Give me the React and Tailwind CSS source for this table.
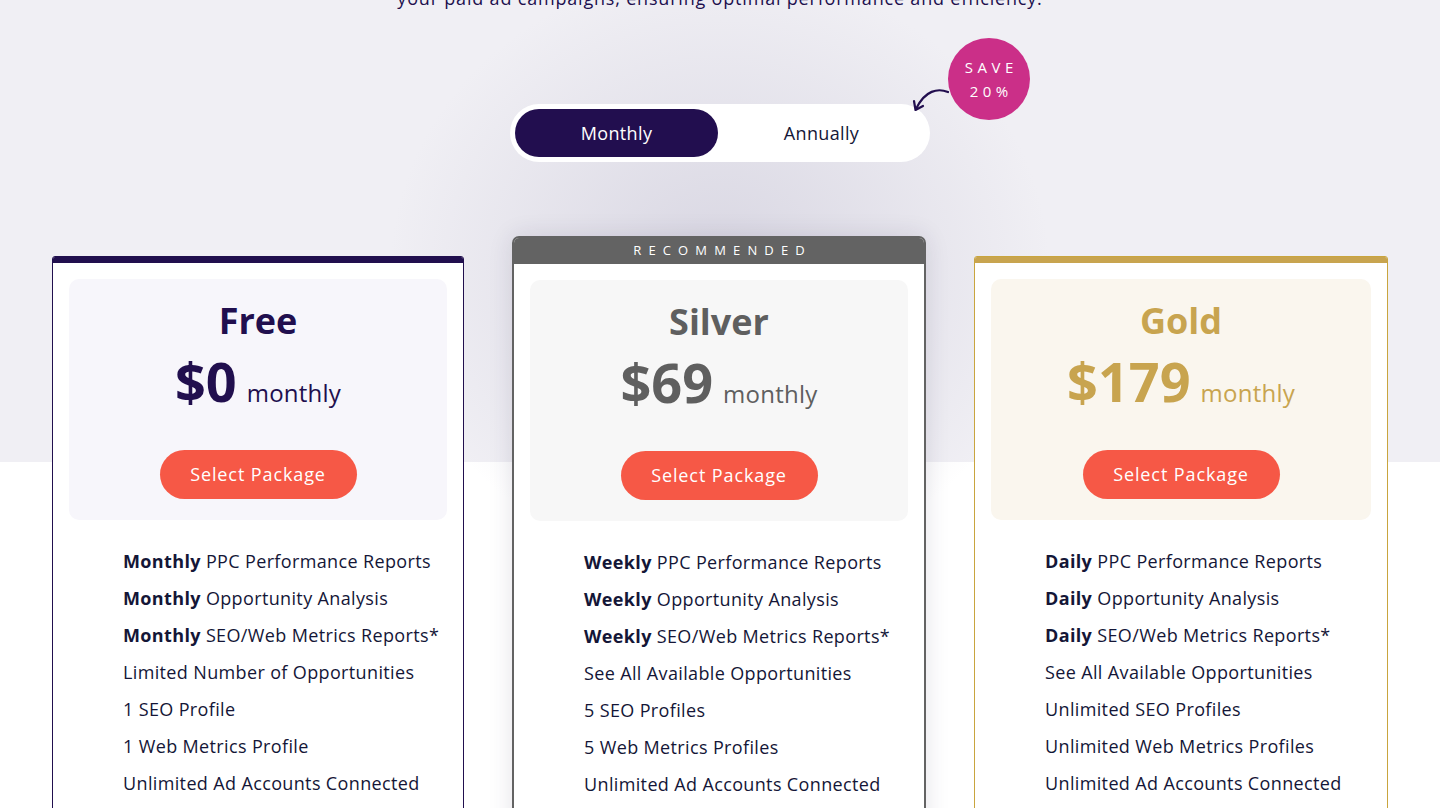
import React, { useState } from 'react';

const plans = [
  {
    name: 'Free',
    price: '$0',
    accent: 'text-[#210f4e]',
    border: 'border-[#210f4e]',
    bar: 'bg-[#210f4e]',
    box: 'bg-[#f7f6fb]',
    freq: 'Monthly',
    features: [
      'Limited Number of Opportunities',
      '1 SEO Profile',
      '1 Web Metrics Profile',
      'Unlimited Ad Accounts Connected'
    ]
  },
  {
    name: 'Silver',
    price: '$69',
    accent: 'text-[#5f5f5f]',
    border: 'border-[#636363]',
    bar: 'bg-[#636363]',
    box: 'bg-[#f7f7f7]',
    freq: 'Weekly',
    recommended: true,
    features: [
      'See All Available Opportunities',
      '5 SEO Profiles',
      '5 Web Metrics Profiles',
      'Unlimited Ad Accounts Connected'
    ]
  },
  {
    name: 'Gold',
    price: '$179',
    accent: 'text-[#c8a44f]',
    border: 'border-[#c9a53e]',
    bar: 'bg-[#c8a44f]',
    box: 'bg-[#faf6ee]',
    freq: 'Daily',
    width: 'w-[414px]',
    features: [
      'See All Available Opportunities',
      'Unlimited SEO Profiles',
      'Unlimited Web Metrics Profiles',
      'Unlimited Ad Accounts Connected'
    ]
  }
];

const PlanCard = ({ plan }) => {
  const rec = plan.recommended;
  return (
    <div
      className={
        rec
          ? 'w-[414px] bg-white rounded-t-[7px] overflow-hidden border-2 border-[#636363] shadow-[0_0_24px_rgba(40,30,70,0.12)]'
          : `${plan.width || 'w-[412px]'} mt-[20px] bg-white rounded-t-[3px] overflow-hidden border ${plan.border}`
      }
    >
      {rec ? (
        <div className="h-[26px] bg-[#636363] text-white text-[13px] tracking-[0.55em] font-medium flex items-center justify-center pl-[0.55em]">
          RECOMMENDED
        </div>
      ) : (
        <div className={`h-[6px] ${plan.bar}`} />
      )}

      <div className="px-[16px] pt-[16px]">
        {/* --- Price box --- */}
        <div className={`${plan.box} rounded-[10px] pt-[20px] pb-[21px] flex flex-col items-center`}>
          <h3 className={`text-[36px] leading-[44px] font-bold ${plan.accent}`}>{plan.name}</h3>
          <div className={`mt-[6px] h-[64px] flex items-baseline gap-[10px] ${plan.accent}`}>
            <span className="text-[54px] leading-[64px] font-bold">{plan.price}</span>
            <span className="text-[24px] tracking-[0.01em]">monthly</span>
          </div>
          <button className="mt-[37px] w-[197px] h-[49px] rounded-full bg-[#f65846] text-white text-[18px] tracking-[0.05em]">
            Select Package
          </button>
        </div>

        {/* --- Features --- */}
        <ul className="pl-[54px] pt-[23px] pb-[40px] text-[18px] leading-[37px] tracking-[0.02em] text-[#141637]">
          <li><span className="font-bold">{plan.freq}</span> PPC Performance Reports</li>
          <li><span className="font-bold">{plan.freq}</span> Opportunity Analysis</li>
          <li><span className="font-bold">{plan.freq}</span> SEO/Web Metrics Reports*</li>
          {plan.features.map((f) => (
            <li key={f}>{f}</li>
          ))}
        </ul>
      </div>
    </div>
  );
};

export default function App() {
  const [billing, setBilling] = useState('monthly');

  return (
    <div
      className="min-h-screen overflow-hidden font-['Open_Sans',sans-serif] bg-[radial-gradient(ellipse_330px_300px_at_720px_270px,#d8d6e2,rgba(240,239,244,0)),linear-gradient(to_bottom,#f0eff4_462px,#ffffff_462px)]"
    >
      {/* --- Header copy --- */}
      <p className="-mt-[16px] text-center text-[18px] leading-[28px] tracking-[0.045em] text-[#210f4e]">
        your paid ad campaigns, ensuring optimal performance and efficiency.
      </p>

      {/* --- Billing toggle --- */}
      <div className="mt-[92px] flex justify-center">
        <div className="relative">
          <div className="w-[420px] h-[58px] bg-white rounded-full p-[5px] flex">
            <button
              onClick={() => setBilling('monthly')}
              className={`w-[203px] h-[48px] rounded-full text-[18px] tracking-[0.02em] ${billing === 'monthly' ? 'bg-[#220e4f] text-white' : 'text-[#141637]'}`}
            >
              Monthly
            </button>
            <button
              onClick={() => setBilling('annually')}
              className={`flex-1 h-[48px] rounded-full text-[18px] tracking-[0.02em] ${billing === 'annually' ? 'bg-[#220e4f] text-white' : 'text-[#141637]'}`}
            >
              Annually
            </button>
          </div>

          <svg className="absolute left-[400px] -top-[16px]" width="42" height="28" viewBox="0 0 42 28" fill="none">
            <path d="M38 4 C 28 0, 15 2, 6 21" stroke="#220e4f" strokeWidth="2.2" strokeLinecap="round" />
            <path d="M4 13 L 5.5 22 L 13 18" stroke="#220e4f" strokeWidth="2.2" strokeLinecap="round" strokeLinejoin="round" />
          </svg>

          <div className="absolute left-[438px] -top-[66px] w-[82px] h-[82px] rounded-full bg-[#cb2f88] text-white flex flex-col items-center justify-center text-[15px] leading-[24px] tracking-[0.3em] pl-[0.3em]">
            <span>SAVE</span>
            <span>20%</span>
          </div>
        </div>
      </div>

      {/* --- Plans --- */}
      <div className="mt-[74px] w-[1336px] mx-auto flex items-start justify-between">
        {plans.map((p) => (
          <PlanCard key={p.name} plan={p} />
        ))}
      </div>
    </div>
  );
}
